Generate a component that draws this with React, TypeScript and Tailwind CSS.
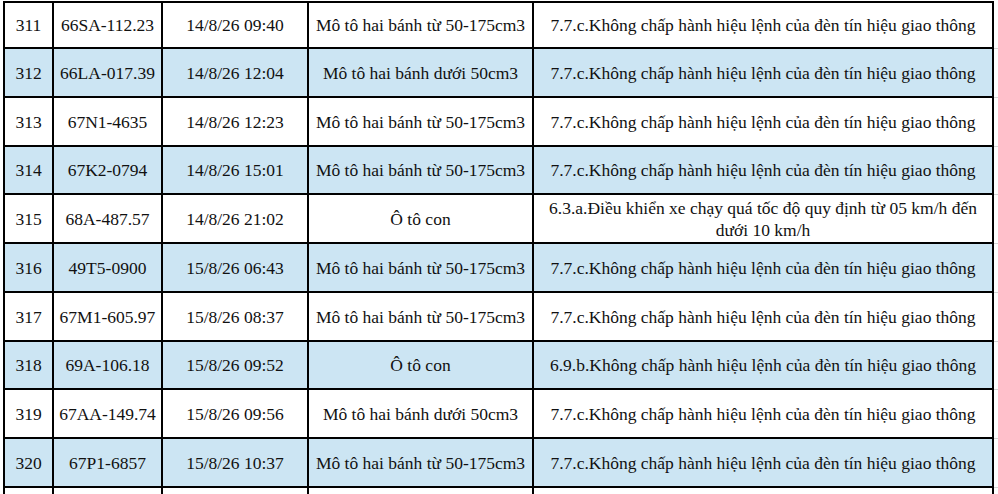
const rows = [
  { no: "311", plate: "66SA-112.23", time: "14/8/26 09:40", type: "Mô tô hai bánh từ 50-175cm3", act: "7.7.c.Không chấp hành hiệu lệnh của đèn tín hiệu giao thông" },
  { no: "312", plate: "66LA-017.39", time: "14/8/26 12:04", type: "Mô tô hai bánh dưới 50cm3", act: "7.7.c.Không chấp hành hiệu lệnh của đèn tín hiệu giao thông" },
  { no: "313", plate: "67N1-4635", time: "14/8/26 12:23", type: "Mô tô hai bánh từ 50-175cm3", act: "7.7.c.Không chấp hành hiệu lệnh của đèn tín hiệu giao thông" },
  { no: "314", plate: "67K2-0794", time: "14/8/26 15:01", type: "Mô tô hai bánh từ 50-175cm3", act: "7.7.c.Không chấp hành hiệu lệnh của đèn tín hiệu giao thông" },
  { no: "315", plate: "68A-487.57", time: "14/8/26 21:02", type: "Ô tô con", act: "6.3.a.Điều khiển xe chạy quá tốc độ quy định từ 05 km/h đến dưới 10 km/h" },
  { no: "316", plate: "49T5-0900", time: "15/8/26 06:43", type: "Mô tô hai bánh từ 50-175cm3", act: "7.7.c.Không chấp hành hiệu lệnh của đèn tín hiệu giao thông" },
  { no: "317", plate: "67M1-605.97", time: "15/8/26 08:37", type: "Mô tô hai bánh từ 50-175cm3", act: "7.7.c.Không chấp hành hiệu lệnh của đèn tín hiệu giao thông" },
  { no: "318", plate: "69A-106.18", time: "15/8/26 09:52", type: "Ô tô con", act: "6.9.b.Không chấp hành hiệu lệnh của đèn tín hiệu giao thông" },
  { no: "319", plate: "67AA-149.74", time: "15/8/26 09:56", type: "Mô tô hai bánh dưới 50cm3", act: "7.7.c.Không chấp hành hiệu lệnh của đèn tín hiệu giao thông" },
  { no: "320", plate: "67P1-6857", time: "15/8/26 10:37", type: "Mô tô hai bánh từ 50-175cm3", act: "7.7.c.Không chấp hành hiệu lệnh của đèn tín hiệu giao thông" },
];

// row heights in px (bottom border included)
const heights = [48, 49, 49, 48, 49, 49, 49, 48, 49, 49];

const cols = "grid grid-cols-[51px_109px_146px_225px_460px_1fr]";
const cell = "flex items-center justify-center text-center border-r-2 border-b-2 border-black px-1";

const App = () => {
  return (
    <div className="w-[998px] h-[494px] overflow-hidden bg-white text-[#111] text-[17.5px] leading-[22px] font-['Liberation_Serif','Times_New_Roman',serif]">
      <div className="mt-[1px] ml-[3px]">
        {rows.map((r, i) => {
          const bg = i % 2 ? "bg-[#cce5f3]" : "";
          const top = i === 0 ? "border-t-2" : "";
          return (
            <div key={r.no} className={cols} style={{ height: heights[i] }}>
              <div className={`${cell} border-l-2 ${top} ${bg}`}>{r.no}</div>
              <div className={`${cell} ${top} ${bg}`}>{r.plate}</div>
              <div className={`${cell} ${top} ${bg}`}>{r.time}</div>
              <div className={`${cell} ${top} ${bg}`}>{r.type}</div>
              <div className={`${cell} px-2 ${top} ${bg}`}>{r.act}</div>
              <div className="border-b border-[#d4d4d4]" />
            </div>
          );
        })}
        <div className={`${cols} h-[49px]`}>
          <div className={`${cell} border-l-2`} />
          <div className={cell} />
          <div className={cell} />
          <div className={cell} />
          <div className={cell} />
          <div />
        </div>
      </div>
    </div>
  );
};

export default App;
